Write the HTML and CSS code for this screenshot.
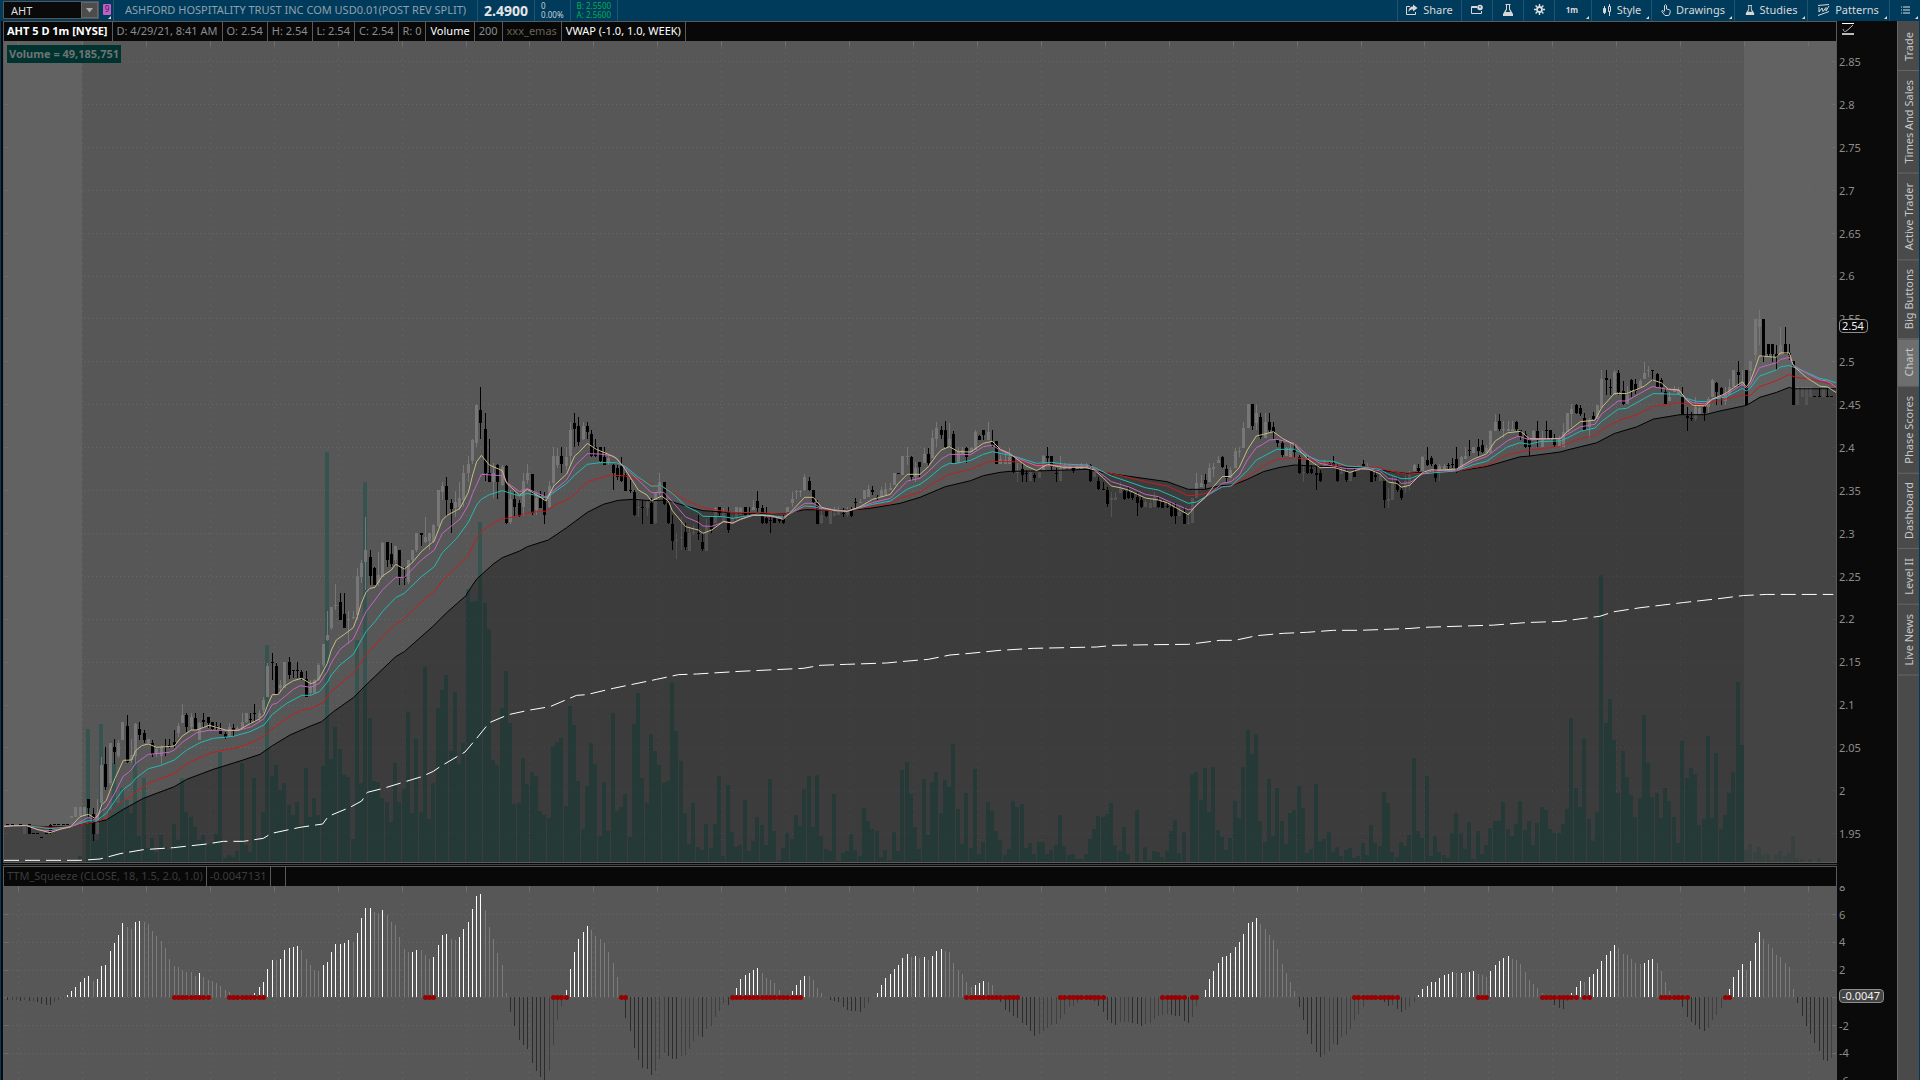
FILE: index.html
```html
<!DOCTYPE html>
<html lang="en">
<head>
    <meta charset="UTF-8">
    <meta name="viewport" content="width=device-width, initial-scale=1.0">
    <title>AHT - Charts</title>
    <link rel="stylesheet" href="styles.css">
</head>
<body>
    <header class="topbar">
        <div class="symbol">
            <input type="text" id="symbol" value="AHT" aria-label="Symbol">
            <button class="symbol-drop" aria-label="Recent symbols">
                <svg width="7" height="5" viewBox="0 0 7 5"><path d="M0 0h7L3.5 4.5z" fill="#aaa"/></svg>
            </button>
        </div>
        <button class="link-color menu" aria-label="Link color"><span>9</span></button>
        <div class="company">ASHFORD HOSPITALITY TRUST INC COM USD0.01(POST REV SPLIT)</div>
        <div class="last">2.4900</div>
        <div class="pair change"><span>0</span><span>0.00%</span></div>
        <div class="pair quote"><span>B: 2.5500</span><span>A: 2.5600</span></div>
        <nav class="tools">
            <button class="tool w-share">
                <svg width="12" height="12" viewBox="0 0 12 12" fill="none" stroke="#d8d8d8"><path d="M4 2.5H.5v8h9V8"/><path d="M7 .5v2C4 2.5 2.500 5 2.500 8 4 6 5 5.500 7 5.500v2L11.500 4z" fill="#d8d8d8" stroke="none"/></svg>
                Share
            </button>
            <button class="tool w-icon" aria-label="Flexible grid">
                <svg width="12" height="12" viewBox="0 0 12 12" fill="none" stroke="#d8d8d8"><path d="M6 2.500H.5v7h10V7M.5 3.500H6"/><circle cx="9" cy="3.500" r="2.800" fill="#d8d8d8" stroke="none"/><path d="M9 2v2" stroke="#003b5c"/></svg>
            </button>
            <button class="tool w-icon" aria-label="Edit studies">
                <svg width="12" height="12" viewBox="0 0 12 12" fill="#d8d8d8"><path d="M3.500 0h5v1H8v4l3 5v2H1v-2l3-5V1h-.5zM5 1v4.500L3.700 8h4.600L7 5.500V1z" fill-rule="evenodd"/></svg>
            </button>
            <button class="tool w-icon" aria-label="Chart settings">
                <svg width="11" height="11" viewBox="0 0 11 11" fill="none" stroke="#e0e0e0"><circle cx="5.500" cy="5.500" r="2.500" stroke-width="1.800"/><path d="M5.500 0v2M5.500 9v2M0 5.500h2M9 5.500h2M1.600 1.600L3 3M8 8l1.400 1.400M9.400 1.600L8 3M3 8L1.600 9.400" stroke-width="1.400"/></svg>
            </button>
            <button class="tool w-frame menu">1m</button>
            <button class="tool w-style menu">
                <svg width="10" height="12" viewBox="0 0 10 12" fill="#d8d8d8" stroke="#d8d8d8"><path d="M2.500 2v8M7.500 0v12" fill="none"/><path d="M1.500 4.500h2v4h-2z"/><path d="M6.500 2.500h2v5h-2z" fill="#003b5c"/></svg>
                Style
            </button>
            <button class="tool w-draw menu">
                <svg width="10" height="12" viewBox="0 0 10 12" fill="none" stroke="#d8d8d8"><path d="M3.500 7V1.500q1-1.500 2 0V5l3 .8q1 .3.800 1.700l-.6 2.500-1 1.500H4L.8 7.500q0-1.300 1.200-.8l1.500 1.500"/></svg>
                Drawings
            </button>
            <button class="tool w-studies menu">
                <svg width="10" height="12" viewBox="0 0 12 12" fill="#d8d8d8"><path d="M3.500 0h5v1H8v4l3 5v2H1v-2l3-5V1h-.5zM5 1v4.500L3.700 8h4.600L7 5.500V1z" fill-rule="evenodd"/></svg>
                Studies
            </button>
            <button class="tool w-patterns menu">
                <svg width="12" height="12" viewBox="0 0 12 12" fill="none" stroke="#d8d8d8"><path d="M0 1.500L11 .5M0 11.500L11 7.500M1 3v5l3-4 1 3.500 3-4v3.500l3-5"/></svg>
                Patterns
            </button>
            <button class="tool w-icon menu" aria-label="Menu">
                <svg width="9" height="8" viewBox="0 0 9 8" stroke="#e0e0e0"><path d="M0 1h1M2 1h7M0 4h1M2 4h7M0 7h1M2 7h7"/></svg>
            </button>
        </nav>
    </header>

    <main class="workspace">
        <section class="charts">
            <div class="legend">
                <span class="bright"><b>AHT 5 D 1m [NYSE]</b></span>
                <span>D: 4/29/21, 8:41 AM</span>
                <span>O: 2.54</span>
                <span>H: 2.54</span>
                <span>L: 2.54</span>
                <span>C: 2.54</span>
                <span>R: 0</span>
                <span class="bright">Volume</span>
                <span>200</span>
                <span class="emas">xxx_emas</span>
                <span class="bright">VWAP (-1.0, 1.0, WEEK)</span>
            </div>
            <div class="axis-top">
                <svg width="12" height="12" viewBox="0 0 12 12" fill="none" stroke="#bbb"><path d="M0 .500h12" stroke="#fff"/><path d="M0 11h12" stroke-width="2"/><path d="M1 6q1 4 4 1.500T11 2"/></svg>
            </div>

            <div class="plot price-plot">
                <svg id="priceChart" viewBox="4 41 1832 821" preserveAspectRatio="none"></svg>
                <div class="volume-label">Volume = 49,185,751</div>
            </div>
            <div class="axis price-axis">
                <ul>
                    <li>2.85</li><li>2.8</li><li>2.75</li><li>2.7</li><li>2.65</li><li>2.6</li><li>2.55</li>
                    <li>2.5</li><li>2.45</li><li>2.4</li><li>2.35</li><li>2.3</li><li>2.25</li><li>2.2</li>
                    <li>2.15</li><li>2.1</li><li>2.05</li><li>2</li><li>1.95</li>
                </ul>
                <div class="bubble price-bubble">2.54</div>
            </div>

            <div class="splitter"></div>

            <div class="legend squeeze-legend">
                <span>TTM_Squeeze (CLOSE, 18, 1.5, 2.0, 1.0)</span>
                <span>-0.0047131</span>
                <span></span>
            </div>

            <div class="plot">
                <svg id="squeezeChart" viewBox="4 886 1832 194" preserveAspectRatio="none"></svg>
            </div>
            <div class="axis squeeze-axis">
                <ul>
                    <li>8</li><li>6</li><li>4</li><li>2</li><li></li><li>-2</li><li>-4</li><li>-6</li>
                </ul>
                <div class="bubble squeeze-bubble">-0.0047</div>
            </div>
        </section>

        <nav class="side-tabs">
            <button>Trade</button>
            <button>Times And Sales</button>
            <button>Active Trader</button>
            <button>Big Buttons</button>
            <button class="active">Chart</button>
            <button>Phase Scores</button>
            <button>Dashboard</button>
            <button>Level II</button>
            <button>Live News</button>
        </nav>
    </main>

    <script src="chart.js"></script>
</body>
</html>
```

FILE: styles.css
```css
* {
    box-sizing: border-box;
}
body {
    margin: 0;
    height: 100vh;
    display: flex;
    flex-direction: column;
    overflow: hidden;
    background-color: #0a0a0a;
    color: #8c8c8c;
    font-family: "Noto Sans", "Open Sans", sans-serif;
    font-size: 11px;
}
button, input {
    font: inherit;
    color: inherit;
    border: none;
    padding: 0;
    margin: 0;
    background: none;
}
svg {
    display: block;
    flex: none;
}

/* top bar */
.topbar {
    display: flex;
    flex: none;
    height: 21px;
    background-color: #003b5c;
    white-space: nowrap;
}
.topbar > div {
    border-right: 1px solid #1d5472;
}
.topbar .symbol {
    display: flex;
    width: 96px;
    height: 18px;
    margin: 1px 0 0 3px;
    border: 1px solid #555;
    background-color: #0a0a0a;
}
.symbol input {
    flex: 1;
    min-width: 0;
    padding-left: 7px;
    color: #ddd;
}
.symbol-drop {
    width: 17px;
    display: flex;
    align-items: center;
    justify-content: center;
    background-color: #4d4d4d;
    border: 1px solid #666;
}
.link-color {
    position: relative;
    width: 14px;
    padding: 4px 2px 0 4px;
}
.link-color span {
    display: block;
    height: 11px;
    border-radius: 1px;
    background-color: #c45fc4;
    color: #401a50;
    font-size: 8px;
    line-height: 10px;
    text-align: center;
}
.link-color {
    align-self: stretch;
    display: flex;
    flex-direction: column;
}
.company {
    padding: 0 11px 0 11px;
    border-left: 1px solid #1d5472;
    font-size: 11px;
    line-height: 20px;
    color: #8fa0ab;
}
.last {
    padding: 0 6px;
    font-size: 14px;
    font-weight: bold;
    line-height: 21px;
    color: #e4e4e4;
}
.pair {
    display: flex;
    flex-direction: column;
    padding: 1px 6px;
    font-size: 8px;
    line-height: 9px;
}
.change {
    color: #c8d0d6;
}
.quote {
    color: #00b050;
}
.tools {
    display: flex;
    margin-left: auto;
}
.tool {
    position: relative;
    display: flex;
    align-items: center;
    justify-content: center;
    gap: 5px;
    padding-bottom: 2px;
    border-left: 1px solid #1d5472;
    color: #d8d8d8;
}
.menu::after {
    content: "";
    position: absolute;
    right: 2px;
    bottom: 2px;
    border-left: 3px solid transparent;
    border-bottom: 3px solid #ddd;
}
.w-icon {
    width: 31px;
}
.w-share {
    width: 64px;
}
.w-frame {
    width: 37px;
    padding-right: 2px;
    font-size: 8px;
    font-weight: bold;
}
.w-style {
    width: 60px;
}
.w-draw {
    width: 83px;
}
.w-studies {
    width: 73px;
}
.w-patterns {
    width: 82px;
}

/* chart area */
.workspace {
    display: flex;
    flex: 1;
    min-height: 0;
    padding-left: 2px;
    border-left: 1px solid #003b5c;
    border-right: 1px solid #003b5c;
}
.charts {
    flex: 1;
    min-width: 0;
    display: grid;
    grid-template-columns: minmax(0, 1fr) 60px;
    grid-template-rows: 20px minmax(0, 822fr) 3px 20px minmax(0, 194fr);
}
.legend {
    grid-column: 1;
    display: flex;
    border: 1px solid #5a5a5a;
    border-bottom: none;
    background-color: #080808;
    font-size: 11px;
    line-height: 18px;
    white-space: nowrap;
    overflow: hidden;
}
.legend span {
    padding: 0 4px;
    border-right: 1px solid #5a5a5a;
}
.legend span:first-child {
    padding-left: 3px;
}
.legend .bright {
    color: #fff;
}
.legend .emas {
    color: #6a6450;
}
.squeeze-legend {
    color: #3c3c3c;
}
.squeeze-legend span {
    padding: 0 3px;
}
.squeeze-legend span:last-child {
    width: 15px;
}
.axis-top {
    padding: 2px 0 0 5px;
}
.plot {
    position: relative;
    border: 1px solid #5a5a5a;
    border-top: none;
    border-bottom: none;
    background-color: #575757;
}
.price-plot {
    border-bottom: 1px solid #5a5a5a;
}
.plot svg {
    width: 100%;
    height: 100%;
}
.volume-label {
    position: absolute;
    top: 4px;
    left: 3px;
    padding: 0 2px;
    background-color: #00332f;
    color: #6c7573;
    font-size: 11px;
    font-weight: bold;
    line-height: 18px;
}
.axis {
    position: relative;
    overflow: hidden;
    display: flex;
    font-size: 11px;
}
.axis ul {
    display: flex;
    flex-direction: column;
    justify-content: space-between;
    margin: 0;
    padding: 13px 0 21px 2px;
    list-style: none;
}
.axis li {
    height: 16px;
    line-height: 16px;
}
.squeeze-axis ul {
    margin: -7px 0 -9px;
    padding: 0 0 0 2px;
}
.bubble {
    position: absolute;
    left: 2px;
    padding: 0 3px 0 2px;
    border: 1px solid #8c8c8c;
    border-radius: 4px;
    background-color: #0a0a0a;
    color: #f0f0f0;
    line-height: 12px;
}
.price-bubble {
    top: 278px;
}
.squeeze-bubble {
    top: 103px;
    background-color: #444;
}
.splitter {
    grid-column: 1;
    border-top: 1px solid #0a0a0a;
    border-bottom: 1px solid #0a0a0a;
    background-color: #444;
}
.plot {
    grid-column: 1;
}
.axis, .axis-top {
    grid-column: 2;
}

/* side tabs */
.side-tabs {
    flex: none;
    width: 22px;
    display: flex;
    flex-direction: column;
    padding-top: 2px;
    border-left: 1px solid #666;
    background-color: #4a4a4a;
}
.side-tabs button {
    padding: 9px 0;
    writing-mode: vertical-rl;
    transform: rotate(180deg);
    border-top: 1px solid #666;
    color: #c8c8c8;
    font-size: 11px;
    line-height: 20px;
    text-align: center;
}
.side-tabs .active {
    background-color: #6e6e6e;
}
```

FILE: chart.js
```js
const NS = 'http://www.w3.org/2000/svg';
const FIRST_X = 7.3;
const STEP = 4.262;

// each block of samples has its own origin and scale: [x0, y0, scaleX, scaleY]
const A = [0, 420, 3, 3];
const B = [440, 360, 3, 3];
const C = [900, 380, 3, 3];
const D = [1360, 290, 3, 2.7034];

// bar position / bar top
const volume = [
    [A, '240 1308 264 927 277 1200 290 1260 303 912 316 1200 329 1170 342 1030 355 1150 368 1105 381 1140 394 1180 406 1020 419 1247 432 1074 445 1285 457 1255 470 1296 483 1245 496 1280 509 1290 522 1212 534 1260 546 1074 560 1175 573 1191 586 1220 598 1260 611 1245 623 1275 636 1270 649 1242 663 995 675 1314 688 1306 701 1311 713 1293 726 1030 739 1275 752 1296 765 1074 778 1260 790 1176 801 675 816 1068 828 1035 840 1110 852 1090 866 1155 880 1185 893 1146 906 1216 918 1044 930 1190 942 1134 956 1185 969 1038 981 96 994 1018 1007 921 1020 988 1033 1066 1045 1070 1058 1257 1071 660 1083 1089 1095 186 1110 895 1122 1083 1135 1085 1147 1133 1160 1146 1174 1206 1186 1030 1199 1146 1212 1108 1224 876 1237 1180 1250 957 1263 1175 1275 741 1288 1197 1301 1089 1313 864'],
    [B, '6 990 18 945 33 1173 45 996 57 1212 69 1150 84 688 96 726 108 723 120 486 135 730 147 807 159 1200 174 1215 186 1045 198 933 210 1090 224 1331 237 1329 249 1194 261 1272 275 1236 288 1248 300 1353 312 1365 326 1374 339 1158 351 1146 363 1134 378 1338 390 1038 402 1095 414 1263 429 1407 441 1278 453 1149 467 1212 480 1428 492 1266 504 1413 519 1059 531 1353 543 1341 555 1302 569 1431 582 1092 594 999 606 1254 621 1329 633 1122 645 1173 657 1215 671 1270 684 1263 696 969 708 1113 723 1203 735 1359 747 1452 762 1329 774 1461 786 1469 798 1392 812 1464 825 1392 837 1248 849 1488 864 1275 876 1416 888 1461 900 1455 915 1320 927 1473 939 1443 951 1371 965 1395 978 1455 990 1257 1002 1413 1017 1500 1029 1464 1041 1419 1055 1437 1068 1365 1080 1398 1092 1287 1107 1248 1119 1401 1131 1245 1143 1428 1158 1467 1170 1473 1182 1302 1194 1503 1209 1479 1221 1473 1233 1422 1245 1470 1259 1488 1272 1344 1284 1383 1296 1407 1311 1413 1323 1491 1335 1470 1347 1500 1362 1416 1374 1473'],
    [C, '6 1170 21 1146 33 1242 45 1341 57 1407 72 1197 84 1365 96 1206 108 1176 123 1299 135 1200 147 1221 159 1092 174 1287 186 1392 198 1239 213 1404 225 1167 237 1422 249 1386 264 1266 276 1293 288 1353 300 1380 315 1425 327 1407 339 1263 351 1281 366 1272 378 1404 390 1389 402 1422 417 1386 429 1386 441 1422 453 1410 468 1395 480 1305 492 1398 506 1425 519 1422 531 1437 543 1437 558 1422 570 1377 582 1347 594 1308 609 1311 621 1302 633 1269 645 1395 660 1413 672 1341 684 1422 711 1290 735 1401 747 1440 762 1413 774 1416 786 1430 801 1413 813 1353 825 1320 837 1419 852 1356 876 1182 888 1176 903 1260 915 1164 927 1296 939 1161 954 1350 966 1371 978 1410 990 1374 1005 1263 1017 1314 1029 1161 1041 1050 1056 1122 1068 1062 1080 1323 1095 1386 1107 1197 1119 1368 1131 1224 1146 1323 1158 1392 1170 1299 1182 1290 1197 1218 1209 1284 1221 1419 1233 1407 1248 1212 1260 1383 1272 1377 1284 1356 1299 1416 1311 1401 1323 1428 1335 1410 1350 1404 1362 1434 1374 1428'],
    [D, '9 1495 21 1527 33 1446 45 1495 60 1503 72 1357 84 1387 97 1520 111 1534 123 1492 135 1503 148 1473 162 1265 174 1463 186 1481 198 1314 213 1530 225 1476 237 1520 249 1527 264 1536 276 1468 288 1414 303 1468 315 1511 327 1438 340 1538 354 1463 366 1525 378 1500 390 1454 405 1436 417 1436 429 1384 441 1457 456 1476 468 1444 480 1381 492 1460 507 1436 519 1500 531 1441 543 1398 558 1406 570 1457 582 1468 597 1468 609 1444 621 1403 633 1157 648 1346 660 1398 672 1214 684 1430 699 1490 711 1411 723 770 735 1171 750 1106 762 1217 774 1359 786 1246 801 1317 813 1365 825 1425 837 1373 852 1149 864 1279 876 1371 891 1360 903 1427 915 1346 927 1382 942 1425 954 1495 966 1219 978 1319 993 1292 1005 1308 1017 1446 1029 1430 1044 1206 1056 1427 1068 1252 1080 1457 1095 1419 1107 1360 1119 1303 1131 1060 1146 1230 1158 1514 1170 1498 1185 1519 1197 1506 1209 1527 1221 1525 1236 1541 1248 1527 1260 1517 1275 1530 1287 1522 1299 1476 1311 1535 1323 1538 1350 1538 1374 1535']
];

// u/d position high bodyTop bodyBottom low
const candles = [
    [A, 'd 28 1213 1213 1216 1216,d 41 1213 1213 1216 1216,d 54 1213 1213 1216 1216,d 66 1213 1213 1216 1216,u 78 1216 1216 1241 1241,d 88 1213 1213 1241 1241,d 101 1239 1239 1242 1242,d 114 1239 1239 1242 1242,d 127 1250 1250 1253 1253,d 139 1239 1239 1242 1242,d 152 1213 1215 1240 1241,d 165 1213 1213 1216 1216,d 178 1213 1213 1216 1216,d 190 1213 1213 1216 1216,d 203 1213 1213 1216 1216,u 214 1188 1188 1193 1193,u 229 1161 1161 1190 1190,u 241 1161 1161 1188 1188,u 253 1161 1161 1188 1188,d 265 1137 1137 1164 1190,d 280 1165 1182 1241 1264,u 292 1137 1180 1241 1241,u 305 1010 1035 1150 1160,d 319 981 1033 1101 1111,u 331 968 968 1090 1095,d 343 958 981 996 1033,u 355 960 970 1007 1015,u 370 906 906 960 960,d 382 884 918 1025 1030,u 395 958 1005 1020 1028,u 407 908 912 1008 1033,d 421 906 927 945 960,d 433 930 939 960 970,u 445 957 957 970 970,d 457 960 970 1003 1010,u 472 985 988 1000 1010,u 484 975 980 1007 1033,d 496 958 979 981 1008,d 508 958 975 977 985,d 523 930 965 975 985,u 535 910 918 938 952,u 547 853 884 908 910,d 559 879 884 921 935,u 574 880 890 920 930,d 586 879 893 927 930,u 598 905 908 960 960,d 613 880 900 906 920,d 625 890 890 908 925,d 637 906 906 928 930,d 649 906 918 920 930,d 664 910 930 941 943,d 676 935 941 950 958,u 688 908 920 948 952,d 700 912 925 930 948,u 715 918 925 930 932,u 727 880 905 925 925,u 739 880 880 905 908,d 752 880 896 900 908,d 766 853 880 882 905,u 778 870 880 895 905,u 790 830 840 870 880,u 802 728 738 830 832,d 817 700 726 728 780,d 829 728 738 822 825,u 841 780 795 803 815,u 854 726 726 803 803,d 868 712 726 765 778,d 880 750 750 752 775,d 892 726 750 752 775,d 907 750 755 775 780,d 919 752 776 830 830,u 932 780 800 820 825,u 945 778 780 818 820,u 958 728 735 780 782,u 970 672 672 735 740,u 982 573 645 661 663,u 994 560 562 624 630,u 1009 493 555 557 570,d 1021 520 546 600 600,d 1033 520 582 624 624,u 1046 572 598 600 672,u 1060 572 590 592 598,u 1072 445 468 585 600,u 1084 420 430 470 490,u 1096 290 390 425 510,d 1111 390 412 468 495,d 1123 440 445 495 495,u 1135 395 465 490 498,u 1147 366 368 470 470,d 1162 366 366 420 440,d 1174 368 402 432 440,u 1187 378 378 420 430,d 1201 390 390 470 495,d 1213 440 470 472 495,u 1225 420 420 485 492,u 1237 390 390 420 428,u 1252 340 340 390 395,d 1264 340 340 345 378,u 1276 290 350 365 368,u 1288 340 340 363 390,u 1303 312 315 365 368,u 1315 210 210 318 320,u 1327 185 198 215 240,d 1339 172 198 240 288,d 1354 238 250 266 340,u 1366 213 245 265 290,u 1378 185 235 260 270,u 1390 135 158 240 262,u 1405 108 133 158 185,u 1417 58 60 122 133'],
    [B, 'u 110 133 135 248 262,d 121 82 150 189 237,d 136 160 207 340 363,d 148 237 340 365 365,u 161 310 340 365 415,d 175 313 315 365 418,u 187 315 320 375 378,d 199 315 318 490 493,u 212 390 418 485 493,d 227 395 418 440 468,d 239 420 430 468 470,u 251 340 362 440 468,u 262 313 340 360 372,d 277 342 342 458 465,u 290 395 415 450 465,d 302 392 415 445 445,d 314 395 420 465 493,u 328 362 378 440 445,u 341 262 288 370 378,u 353 265 288 315 325,d 365 262 288 312 340,u 380 262 290 318 330,u 391 185 210 288 315,d 404 160 189 207 262,d 416 172 198 245 258,u 431 185 198 238 240,d 442 185 198 215 237,d 455 210 222 288 290,d 469 238 262 288 290,d 482 262 262 303 305,d 493 262 290 315 315,u 506 285 295 310 315,d 520 313 315 340 390,d 532 315 325 352 360,d 544 290 318 362 365,d 557 340 345 392 392,d 571 360 390 392 400,d 583 390 395 465 468,u 595 415 440 442 470,d 607 420 442 444 493,u 621 420 425 445 468,d 634 415 428 493 493,u 646 395 400 490 493,u 659 340 365 400 405,d 673 365 367 432 435,d 685 420 430 490 493,d 697 465 492 542 570,u 710 520 540 542 598,u 725 470 530 535 570,d 737 490 515 560 570,u 749 500 520 572 572,u 763 495 515 520 525,d 775 465 520 522 540,d 787 520 545 568 572,u 800 478 500 572 572,d 814 470 472 508 520,u 827 440 445 490 490,d 839 442 442 460 468,u 851 445 460 485 485,d 866 442 460 510 520,u 878 465 470 490 493,u 890 440 442 478 480,u 902 440 445 465 465,d 916 440 442 465 468,d 928 442 455 457 468,u 940 420 440 450 450,d 953 392 422 445 460,d 968 435 445 490 493,d 980 440 475 490 493,d 992 465 480 482 520,d 1005 470 475 490 490,d 1017 470 478 482 490,d 1030 465 470 490 493,u 1043 440 440 465 465,u 1058 395 418 430 440,u 1070 390 392 395 418,u 1082 390 392 394 410,u 1094 342 352 390 392,d 1108 352 362 390 392,d 1120 390 390 425 430,d 1132 420 430 493 493,u 1145 440 465 490 493,d 1159 445 450 468 470,u 1171 445 450 493 493,u 1185 442 460 468 468,u 1198 442 450 465 465,d 1210 445 458 462 470,u 1222 440 455 465 470,d 1234 440 450 468 470,d 1246 415 425 428 450,u 1260 418 425 430 430,u 1272 390 390 418 418,u 1285 375 388 410 410,d 1298 378 390 395 405,d 1312 405 410 412 420,u 1324 380 390 410 410,u 1337 370 388 405 405,u 1351 370 385 390 390,u 1363 340 340 375 375,d 1375 338 340 343 343,u 1387 288 288 345 345,u 1402 262 288 290 315,d 1414 288 290 352 362'],
    [C, 'u 47 245 265 290 305,d 58 245 247 262 290,u 73 205 222 250 250,d 85 205 222 250 258,u 97 150 175 235 235,u 109 125 143 178 200,d 124 138 150 165 178,d 136 123 150 200 205,u 148 130 178 195 200,d 160 152 162 250 252,u 175 200 215 250 250,u 187 200 210 225 225,d 199 202 204 230 250,u 212 200 205 215 215,u 226 150 155 210 210,d 238 165 168 180 180,d 250 150 150 165 180,u 265 125 155 180 180,d 277 150 185 195 200,d 289 183 183 253 253,u 301 225 238 252 252,u 314 220 240 252 252,u 328 205 230 252 252,d 341 225 228 275 280,u 354 250 275 277 305,d 367 250 268 285 305,d 379 270 280 282 305,u 391 270 275 303 303,d 403 280 285 295 305,u 418 270 275 295 295,u 430 225 228 270 270,d 442 202 228 233 255,d 455 228 228 262 270,d 469 265 278 282 305,u 481 228 265 303 303,u 493 250 255 270 270,u 508 252 265 270 270,d 520 258 262 272 280,u 532 255 262 270 270,u 545 250 252 270 270,u 557 250 252 265 265,d 571 252 254 303 305,u 583 265 275 290 290,d 595 290 303 328 330,d 609 305 327 330 330,d 622 322 330 372 380,u 634 335 355 360 410,u 646 335 350 360 360,u 661 305 325 340 340,d 673 330 332 358 360,d 685 320 335 355 358,d 697 335 338 355 360,d 712 335 350 368 408,d 724 350 360 382 385,u 736 360 365 382 382,u 749 360 370 383 383,u 763 335 350 380 380,d 775 350 360 380 383,d 788 360 365 383 383,d 801 365 378 382 383,d 814 365 380 408 410,d 826 370 385 408 432,u 839 380 395 408 408,d 854 380 400 432 433,u 865 395 430 433 433,u 877 355 355 430 430,u 890 280 308 355 355,u 903 285 310 320 320,d 916 282 300 312 328,u 928 250 265 305 305,u 940 250 262 268 290,u 954 228 240 250 250,d 967 228 230 262 265,d 979 255 268 293 305,u 993 262 270 295 295,u 1006 205 212 265 265,u 1018 200 212 214 230,u 1030 125 143 205 205,u 1042 72 72 145 145,d 1057 72 72 138 150,u 1069 75 100 130 150,d 1081 100 112 172 178,u 1096 100 125 175 175,d 1108 100 125 150 160,d 1120 125 140 155 178,d 1132 180 180 190 202,d 1147 182 190 225 230,u 1159 200 205 228 228,u 1171 185 205 230 230,d 1183 190 208 215 230,d 1198 225 230 278 283,u 1210 255 275 277 305,d 1222 230 240 280 282,d 1235 255 268 280 283,d 1249 255 280 285 330,d 1261 270 278 303 305,u 1273 240 255 262 262,d 1285 245 250 255 255,d 1300 228 250 258 262,d 1312 252 262 303 305,u 1324 265 275 283 283,d 1337 268 275 300 305,u 1350 270 275 303 303,d 1363 262 275 290 292,u 1375 255 262 272 272,d 1390 240 252 262 262,u 1402 250 260 268 268'],
    [D, 'd 35 485 488 518 518,d 47 488 500 505 515,u 60 490 500 515 515,d 73 515 515 568 588,u 85 535 565 570 588,u 97 500 520 568 568,d 111 505 515 542 545,d 124 535 542 562 568,u 137 500 515 535 550,u 149 490 500 530 540,u 163 470 473 490 490,d 175 470 480 488 493,u 188 450 452 490 490,d 200 425 460 472 475,d 214 450 454 470 475,d 227 470 473 508 518,u 239 470 475 495 515,u 251 470 475 485 485,d 264 468 474 476 485,d 277 455 470 473 480,d 289 425 457 490 495,u 304 450 452 485 485,u 316 425 450 458 458,d 328 405 432 436 448,u 341 425 425 440 440,d 355 403 425 435 448,d 367 405 420 437 440,u 380 420 428 440 440,u 391 378 380 440 440,u 406 335 357 380 380,d 418 335 355 375 380,u 430 355 375 378 400,u 443 355 375 380 380,u 457 355 375 380 380,d 469 355 357 375 380,d 482 378 378 395 405,d 494 380 390 425 428,d 508 402 405 425 450,u 520 378 380 405 405,d 532 355 380 403 425,u 545 380 403 425 425,d 559 355 378 380 405,d 572 378 378 400 405,d 584 390 402 420 425,u 597 395 405 425 425,u 611 360 385 425 425,u 622 333 333 385 385,u 635 308 322 335 370,d 649 308 310 332 335,d 661 310 320 335 340,d 674 333 345 378 380,u 686 345 355 370 400,d 700 330 340 350 355,u 712 310 312 350 350,u 725 215 240 320 320,d 736 215 238 242 285,d 751 240 262 265 285,u 763 215 222 285 285,d 775 215 225 275 285,d 788 245 272 308 310,u 802 260 285 308 308,d 814 240 242 270 290,d 827 240 255 272 280,u 840 240 245 262 262,u 853 195 225 240 240,u 865 205 215 220 235,d 877 215 216 218 245,d 892 225 228 262 265,d 904 238 242 262 275,d 916 265 275 308 310,u 929 275 290 300 300,u 943 260 268 275 275,u 957 262 270 280 280,d 967 262 290 335 338,d 979 315 340 345 380,d 993 330 345 348 355,u 1006 290 315 350 355,u 1018 310 320 338 338,d 1031 310 315 333 355,u 1045 290 295 315 335,u 1057 240 242 290 290,d 1069 250 252 275 310,d 1081 262 265 285 310,u 1096 262 280 300 310,u 1108 240 262 285 285,u 1120 215 215 262 262,d 1132 192 222 230 260,u 1147 215 250 260 260,d 1159 215 215 310 310,u 1171 192 192 220 250,u 1186 78 78 175 190,u 1198 55 78 100 150,d 1210 78 78 180 195,d 1222 146 146 172 180,d 1237 146 146 172 195,d 1249 148 172 182 215,u 1261 100 150 175 175,d 1273 100 146 172 172,d 1288 146 170 175 190,d 1300 192 192 310 310,u 1313 262 262 310 310,u 1325 262 262 290 290,u 1339 262 262 310 310,u 1352 262 262 290 290,d 1365 286 286 289 289,d 1376 265 286 289 289,u 1389 265 265 289 289,d 1402 265 286 289 289,d 1414 286 286 289 289']
];

const lines = {
    red: [
        [A, '12 1217 80 1217 150 1222 212 1220 265 1210 305 1200 319 1193 345 1165 370 1142 395 1130 407 1116 445 1090 523 1060 560 1032 600 1012 640 997 715 982 760 965 792 948 830 916 880 882 905 871 932 866 970 848 994 815 1020 792 1060 760 1098 704 1147 652 1187 612 1213 596 1264 545 1303 514 1327 482 1405 405'],
        [B, '110 533 130 510 160 490 187 475 200 475 239 467 262 458 318 453 350 432 390 415 404 402 442 365 500 348 520 346 557 348 600 360 634 372 680 386 737 420 789 443 830 450 880 458 953 457 1030 463 1060 457 1094 442 1150 450 1222 453 1298 438 1351 431'],
        [C, '0 355 60 337 100 310 148 283 212 268 265 245 300 244 370 246 400 255 440 252 490 258 570 257 609 275 660 286 736 305 801 318 865 347 890 346 928 338 967 322 993 319 1042 290 1100 252 1130 238 1183 233 1235 240 1260 247 1340 258'],
        [D, '0 477 60 480 85 488 140 498 188 495 289 490 341 480 380 474 443 445 508 433 600 423 650 405 705 393 725 378 775 353 830 338 880 314 960 305 980 308 1035 310 1057 303 1147 284 1171 285 1198 262 1249 245 1288 228 1305 236 1345 240 1380 247 1428 258']
    ],
    cyan: [
        [A, '12 1218 80 1217 150 1226 212 1220 265 1202 290 1203 305 1190 319 1180 345 1142 370 1108 395 1090 407 1075 445 1046 480 1037 523 1020 560 990 600 968 640 955 700 949 750 935 792 915 817 883 860 850 905 826 932 826 958 815 982 787 994 765 1020 735 1060 703 1098 635 1125 605 1147 575 1187 533 1213 520 1264 470 1303 440 1327 398 1370 355 1405 307'],
        [B, '110 435 124 418 148 404 187 392 239 408 262 400 318 414 380 370 404 345 442 313 480 308 530 308 557 320 595 352 634 378 665 378 697 400 737 438 775 457 789 469 851 470 878 475 953 462 1030 471 1094 438 1120 440 1145 446 1222 453 1298 433 1351 423'],
        [C, '22 327 60 313 85 295 124 262 148 250 165 251 212 241 250 223 277 215 340 228 410 250 455 247 490 252 557 255 583 262 634 288 690 307 736 323 775 330 826 352 865 370 890 366 928 343 967 320 993 318 1042 272 1069 240 1130 208 1183 208 1222 228 1260 243 1300 244 1340 258'],
        [D, '0 478 60 485 85 498 124 510 149 510 188 497 289 489 341 472 380 463 443 424 480 413 508 417 540 410 600 408 622 400 661 382 705 373 725 355 775 322 800 320 853 293 880 280 957 282 979 293 1010 301 1045 302 1057 295 1096 290 1147 266 1159 273 1171 265 1198 233 1249 216 1261 208 1288 204 1340 223 1380 239 1402 243 1428 251']
    ],
    magenta: [
        [A, '12 1218 80 1217 120 1230 150 1232 212 1221 265 1192 285 1200 305 1172 319 1163 345 1118 370 1068 385 1058 395 1048 407 1030 445 1003 508 997 523 990 547 967 590 938 627 931 715 931 755 920 792 896 817 853 830 850 880 808 900 797 932 802 958 790 982 755 994 728 1020 688 1060 657 1098 575 1125 540 1147 510 1187 472 1213 472 1264 420 1303 390 1327 340 1380 297 1405 255'],
        [B, '98 400 124 343 187 347 200 367 239 395 262 386 318 411 380 360 404 318 442 281 480 282 520 288 557 325 595 360 634 398 672 397 697 425 737 471 775 487 789 498 815 499 851 486 878 488 940 464 1030 474 1094 430 1120 430 1145 445 1222 454 1298 428 1351 415'],
        [C, '22 303 60 295 85 275 124 237 148 223 212 224 250 200 277 195 301 211 335 225 379 246 410 257 490 258 557 258 583 266 634 305 690 322 736 343 775 350 826 373 865 389 878 387 916 352 967 310 993 305 1018 285 1042 240 1069 203 1085 195 1108 180 1130 178 1183 190 1222 225 1260 250 1340 266'],
        [D, '0 482 35 485 60 489 85 510 111 512 124 523 149 521 188 497 214 490 289 487 341 463 380 450 443 407 475 395 508 405 600 402 622 390 661 370 705 363 725 335 775 300 800 300 853 273 877 261 925 269 957 272 979 295 1000 305 1035 308 1057 295 1096 285 1147 255 1159 266 1171 257 1198 210 1249 197 1261 188 1288 182 1300 203 1340 225 1380 243 1402 246 1428 262']
    ],
    tan: [
        [A, '12 1220 40 1217 80 1217 110 1228 150 1238 180 1228 212 1220 240 1190 265 1183 285 1195 295 1185 305 1155 319 1141 331 1110 345 1075 370 1021 395 1020 407 992 425 977 445 972 470 982 523 978 547 948 574 930 590 930 627 916 650 922 680 931 715 931 752 910 778 897 792 884 805 850 817 824 835 823 854 798 880 782 905 775 932 791 945 787 958 775 982 730 994 690 1009 660 1033 643 1060 623 1072 590 1084 550 1098 517 1110 505 1125 502 1147 468 1174 450 1187 433 1213 447 1235 430 1264 395 1303 362 1327 300 1340 287 1380 265 1405 217'],
        [B, '98 345 110 305 124 286 148 315 187 332 200 370 239 405 262 388 290 405 318 423 341 378 380 342 404 288 416 278 442 250 469 268 506 283 530 295 557 330 595 390 621 405 634 423 665 408 685 423 697 452 737 500 763 507 775 510 789 520 815 510 851 484 878 490 902 477 940 466 992 467 1030 478 1058 450 1094 412 1120 412 1145 442 1185 452 1222 454 1260 440 1298 418 1351 403 1375 370'],
        [C, '22 283 60 283 85 260 110 225 124 210 148 200 175 215 212 216 250 190 277 184 301 208 328 220 379 258 410 272 442 253 490 262 557 262 583 270 609 293 634 318 660 323 685 330 736 354 775 360 801 368 826 382 865 404 890 374 916 352 940 320 967 290 993 289 1018 262 1042 210 1069 168 1090 163 1120 155 1147 175 1183 194 1222 236 1260 263 1300 262 1350 277'],
        [D, '0 484 25 484 60 497 85 519 111 523 124 533 149 528 188 493 214 486 239 487 289 484 316 470 341 457 380 443 406 408 443 386 482 382 508 402 600 402 622 383 661 356 705 352 725 318 763 280 800 280 853 260 877 243 904 251 925 268 957 270 979 297 1000 312 1035 313 1057 295 1096 280 1120 265 1147 248 1159 262 1171 247 1186 210 1198 178 1249 182 1261 170 1288 170 1300 205 1340 237 1380 260 1402 262 1428 277']
    ],
    slow: [
        [A, '12 1217 150 1220 212 1219 265 1210 319 1200 370 1168 430 1135 523 1100 560 1078 640 1048 720 1023 780 1003 817 977 870 945 932 918 965 905 1000 875 1060 833 1098 795 1187 710 1213 695 1300 618 1340 578 1400 525'],
        [B, '80 702 110 657 160 612 187 593 239 573 262 560 325 540 380 503 442 457 490 433 535 421 580 418 634 422 680 420 737 438 789 452 880 458 1030 462 1094 449 1222 451 1290 445 1351 435'],
        [C, '0 370 60 352 136 320 212 302 250 287 300 277 330 274 440 272 560 268 609 277 660 285 801 305 865 328 915 328 960 317 1000 315 1042 298 1090 275 1140 262 1183 255 1240 258'],
        [D, '0 480 60 487 140 496 188 493 289 490 380 477 480 451 508 449 600 438 633 430 710 413 763 388 830 370 880 349 960 337 1035 337 1080 327 1159 312 1200 290 1249 277 1288 263 1300 267 1428 267']
    ],
    vwap: [
        [A, '12 1321 240 1321 300 1317 360 1301 430 1289 520 1283 620 1272 670 1264 730 1264 790 1255 815 1240 900 1222 968 1212 985 1189 1050 1162 1085 1143 1102 1117 1150 1105 1265 1070 1300 1054'],
        [B, '0 1220 75 1176 110 1135 148 1088 205 1064 270 1050 330 1040 410 1006 440 1004 520 985 650 958 715 944 770 942 900 934 1090 925 1140 916 1220 913 1340 909'],
        [C, '0 845 85 838 150 825 210 820 300 811 400 805 590 801 640 796 760 794 865 793 960 781 1005 781 1070 767 1150 760 1220 757 1300 751'],
        [D, '0 920 150 915 190 912 400 906 500 899 600 896 720 882 760 870 840 859 970 845 1080 834 1150 826 1220 823 1420 823']
    ]
};

const colors = {
    red: '#c41e1e',
    cyan: '#1fbdb4',
    magenta: '#c565c5',
    tan: '#c9bb85',
    slow: '#000000',
    vwap: '#ffffff'
};

// histogram tips, one per bar, zero line at 441
const squeeze = [
    450, 450, 450, 453, 450, 453, 453, 456, 462, 464, 465, 456, 450, 443, 435, 423, 411, 396, 384, 378,
    393, 387, 348, 345, 303, 279, 255, 219, 231, 237, 216, 213, 216, 222, 243, 258, 273, 294, 327, 348,
    351, 360, 366, 366, 378, 369, 381, 390, 393, 399, 408, 420, 426, 441, 441, 441, 441, 441, 429, 411,
    396, 357, 330, 330, 327, 300, 294, 291, 288, 300, 327, 345, 360, 363, 345, 336, 306, 282, 281, 279,
    270, 276, 249, 204, 174, 173, 186, 189, 180, 195, 216, 225, 261, 297, 306, 305, 300, 300, 315, 327,
    321, 285, 255, 252, 267, 270, 261, 237, 216, 177, 138, 132, 180, 231, 267, 309, 345, 429, 486, 528,
    570, 585, 597, 639, 663, 681, 690, 663, 585, 510, 468, 420, 357, 306, 267, 246, 228, 240, 258, 267,
    279, 306, 339, 381, 441, 504, 543, 594, 630, 654, 657, 675, 663, 627, 609, 618, 627, 628, 618, 615,
    597, 573, 558, 561, 537, 528, 501, 483, 459, 465, 453, 414, 387, 375, 369, 360, 354, 369, 384, 390,
    399, 420, 441, 438, 423, 405, 390, 378, 378, 390, 414, 429, 441, 450, 453, 456, 471, 480, 483, 484,
    486, 474, 459, 441, 429, 405, 384, 372, 357, 345, 324, 312, 321, 318, 324, 321, 330, 318, 303, 297,
    303, 306, 339, 360, 372, 396, 411, 405, 399, 393, 396, 405, 441, 456, 480, 486, 498, 504, 519, 525,
    543, 558, 552, 543, 534, 525, 522, 507, 492, 471, 468, 459, 445, 446, 448, 453, 468, 486, 510, 519,
    525, 516, 516, 516, 519, 522, 528, 522, 519, 507, 498, 495, 492, 495, 498, 499, 513, 519, 501, 468,
    443, 420, 387, 363, 339, 321, 318, 309, 291, 276, 252, 219, 216, 204, 222, 237, 255, 270, 297, 342,
    369, 396, 423, 471, 510, 552, 582, 606, 621, 612, 603, 582, 585, 561, 555, 537, 510, 492, 471, 450,
    445, 446, 450, 456, 468, 465, 477, 486, 480, 471, 456, 435, 417, 408, 396, 395, 384, 375, 372, 366,
    369, 368, 369, 366, 363, 372, 375, 381, 363, 345, 333, 324, 318, 327, 330, 342, 366, 390, 402, 414,
    429, 441, 450, 465, 474, 477, 453, 429, 411, 393, 396, 381, 372, 357, 333, 315, 303, 285, 294, 312,
    315, 327, 339, 342, 339, 330, 327, 339, 363, 396, 423, 441, 450, 471, 501, 516, 525, 537, 543, 534,
    510, 495, 474, 450, 417, 381, 360, 342, 360, 333, 279, 246, 267, 282, 294, 315, 321, 339, 351, 417,
    459, 498, 528, 552, 579, 603, 630, 633, 624
];

// bars where the squeeze is on, first and last
const squeezeOn = [
    [39, 47], [52, 60], [98, 100], [128, 131], [144, 145], [170, 186], [225, 237], [247, 257],
    [271, 276], [278, 279], [316, 326], [345, 347], [360, 368], [370, 371], [388, 394], [403, 404]
];

function add(parent, name, attrs) {
    const el = document.createElementNS(NS, name);
    for (const key in attrs) {
        el.setAttribute(key, attrs[key]);
    }
    parent.appendChild(el);
    return el;
}

function rect(parent, x, y, width, height, fill) {
    add(parent, 'rect', { x: x, y: y, width: width, height: height, fill: fill, 'shape-rendering': 'crispEdges' });
}

function barX(index) {
    return Math.round(FIRST_X + index * STEP);
}

function snap(x) {
    return barX(Math.round((x - FIRST_X) / STEP));
}

function toPoints(blocks) {
    const points = [];
    blocks.forEach(([frame, text]) => {
        const n = text.split(' ').map(Number);
        for (let i = 0; i < n.length; i += 2) {
            points.push([frame[0] + n[i] / frame[2], frame[1] + n[i + 1] / frame[3]]);
        }
    });
    return points;
}

function drawGrid(svg, top, bottom, rows) {
    rows.forEach(y => {
        add(svg, 'path', { d: `M4 ${y}.5H1836`, stroke: '#666', 'stroke-dasharray': '1 3' });
        rect(svg, 4, y, 4, 1, '#6c6c6c');
        rect(svg, 1832, y, 4, 1, '#6c6c6c');
    });
    for (let i = 0; i < 29; i++) {
        const x = Math.round(18 + i * 63.93);
        add(svg, 'path', { d: `M${x}.5 ${top}V${bottom}`, stroke: '#666', 'stroke-dasharray': '1 5' });
        rect(svg, x, top + 1, 1, 4, '#707070');
    }
}

function drawPrice() {
    const svg = document.getElementById('priceChart');
    // extended hours
    rect(svg, 4, 41, 78, 821, '#626262');
    rect(svg, 1744, 41, 92, 821, '#626262');

    const rows = [];
    for (let i = 0; i < 19; i++) {
        rows.push(Math.round(61 + i * 42.9));
    }
    drawGrid(svg, 41, 862, rows);

    toPoints(volume).forEach(([x, y]) => {
        const top = Math.round(y);
        const opacity = x > 1744 ? 0.25 : 0.5;
        add(svg, 'rect', { x: snap(x) - 2, y: top, width: 4, height: 862 - top, fill: '#14524a', opacity: opacity, 'shape-rendering': 'crispEdges' });
    });

    candles.forEach(([frame, text]) => {
        text.split(',').forEach(item => {
            const c = item.split(' ');
            const x = snap(frame[0] + c[1] / frame[2]);
            const [high, top, bottom, low] = c.slice(2).map(v => Math.round(frame[1] + v / frame[3]));
            const fill = c[0] === 'u' ? '#777' : '#000';
            rect(svg, x, high, 1, Math.max(1, low - high), fill);
            rect(svg, x - 1, top, 3, Math.max(1, bottom - top), fill);
        });
    });

    const slow = toPoints(lines.slow);
    add(svg, 'path', { d: 'M4 862L' + slow.join('L') + 'L1836 862Z', fill: '#000', opacity: 0.3 });

    ['slow', 'red', 'cyan', 'magenta', 'tan'].forEach(name => {
        add(svg, 'polyline', { points: toPoints(lines[name]).join(' '), fill: 'none', stroke: colors[name], 'stroke-width': 1 });
    });
    add(svg, 'polyline', { points: toPoints(lines.vwap).join(' '), fill: 'none', stroke: colors.vwap, 'stroke-width': 1, 'stroke-dasharray': '15 6' });
}

function drawSqueeze() {
    const svg = document.getElementById('squeezeChart');
    const zero = 441;
    drawGrid(svg, 886, 1080, [914, 942, 970, 997, 1025, 1053]);

    squeeze.forEach((tip, i) => {
        const previous = i > 0 ? squeeze[i - 1] : zero;
        const height = Math.round(Math.abs(zero - tip) / 3);
        if (height === 0) {
            return;
        }
        if (tip < zero) {
            rect(svg, barX(i), 997 - height, 1, height, tip < previous ? '#fff' : '#7b7b7b');
        } else {
            rect(svg, barX(i), 997, 1, height, tip > previous ? '#2c2c2c' : '#404040');
        }
    });

    squeezeOn.forEach(([first, last]) => {
        for (let i = first; i <= last; i++) {
            add(svg, 'circle', { cx: barX(i) + 0.5, cy: 997.5, r: 2.5, fill: '#990000' });
        }
    });
}

drawPrice();
drawSqueeze();
```
